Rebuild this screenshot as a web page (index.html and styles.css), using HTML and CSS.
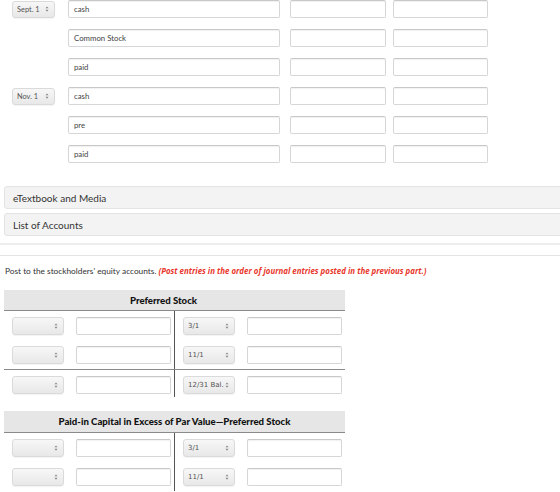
FILE: index.html
```html
<!DOCTYPE html>
<html lang="en">
<head>
    <meta charset="UTF-8">
    <meta name="viewport" content="width=device-width, initial-scale=1.0">
    <title>Stockholders' Equity</title>
    <link rel="stylesheet" href="styles.css">
</head>
<body>
    <div class="journal">
        <div class="jrow">
            <span class="sel date">Sept. 1<svg class="arr" viewBox="0 0 5 8"><path d="M2.5 0.5 L4.5 3 H0.5 Z M2.5 7.5 L4.5 5 H0.5 Z"/></svg></span>
            <input class="acct" type="text" value="cash">
            <input class="amt debit" type="text">
            <input class="amt credit" type="text">
        </div>
        <div class="jrow">
            <span class="date blank"></span>
            <input class="acct" type="text" value="Common Stock">
            <input class="amt debit" type="text">
            <input class="amt credit" type="text">
        </div>
        <div class="jrow">
            <span class="date blank"></span>
            <input class="acct" type="text" value="paid">
            <input class="amt debit" type="text">
            <input class="amt credit" type="text">
        </div>
        <div class="jrow">
            <span class="sel date">Nov. 1<svg class="arr" viewBox="0 0 5 8"><path d="M2.5 0.5 L4.5 3 H0.5 Z M2.5 7.5 L4.5 5 H0.5 Z"/></svg></span>
            <input class="acct" type="text" value="cash">
            <input class="amt debit" type="text">
            <input class="amt credit" type="text">
        </div>
        <div class="jrow">
            <span class="date blank"></span>
            <input class="acct" type="text" value="pre">
            <input class="amt debit" type="text">
            <input class="amt credit" type="text">
        </div>
        <div class="jrow">
            <span class="date blank"></span>
            <input class="acct" type="text" value="paid">
            <input class="amt debit" type="text">
            <input class="amt credit" type="text">
        </div>
    </div>

    <div class="links">
        <div class="bar">eTextbook and Media</div>
        <div class="bar">List of Accounts</div>
    </div>
    <div class="band"></div>
    <div class="rule"></div>

    <p class="prompt">Post to the stockholders' equity accounts. <em class="note">(Post entries in the order of journal entries posted in the previous part.)</em></p>

    <div class="taccount">
        <div class="thead first">Preferred Stock</div>
        <div class="trow">
            <div class="side dr">
                <span class="sel tsel"><svg class="arr" viewBox="0 0 5 8"><path d="M2.5 0.5 L4.5 3 H0.5 Z M2.5 7.5 L4.5 5 H0.5 Z"/></svg></span>
                <input class="tamt" type="text">
            </div>
            <div class="side cr">
                <span class="sel tsel">3/1<svg class="arr" viewBox="0 0 5 8"><path d="M2.5 0.5 L4.5 3 H0.5 Z M2.5 7.5 L4.5 5 H0.5 Z"/></svg></span>
                <input class="tamt" type="text">
            </div>
        </div>
        <div class="trow">
            <div class="side dr">
                <span class="sel tsel"><svg class="arr" viewBox="0 0 5 8"><path d="M2.5 0.5 L4.5 3 H0.5 Z M2.5 7.5 L4.5 5 H0.5 Z"/></svg></span>
                <input class="tamt" type="text">
            </div>
            <div class="side cr">
                <span class="sel tsel">11/1<svg class="arr" viewBox="0 0 5 8"><path d="M2.5 0.5 L4.5 3 H0.5 Z M2.5 7.5 L4.5 5 H0.5 Z"/></svg></span>
                <input class="tamt" type="text">
            </div>
        </div>
        <div class="trow total">
            <div class="side dr">
                <span class="sel tsel"><svg class="arr" viewBox="0 0 5 8"><path d="M2.5 0.5 L4.5 3 H0.5 Z M2.5 7.5 L4.5 5 H0.5 Z"/></svg></span>
                <input class="tamt" type="text">
            </div>
            <div class="side cr">
                <span class="sel tsel">12/31 Bal.<svg class="arr" viewBox="0 0 5 8"><path d="M2.5 0.5 L4.5 3 H0.5 Z M2.5 7.5 L4.5 5 H0.5 Z"/></svg></span>
                <input class="tamt" type="text">
            </div>
        </div>
    </div>

    <div class="taccount">
        <div class="thead">Paid-in Capital in Excess of Par Value—Preferred Stock</div>
        <div class="trow">
            <div class="side dr">
                <span class="sel tsel"><svg class="arr" viewBox="0 0 5 8"><path d="M2.5 0.5 L4.5 3 H0.5 Z M2.5 7.5 L4.5 5 H0.5 Z"/></svg></span>
                <input class="tamt" type="text">
            </div>
            <div class="side cr">
                <span class="sel tsel">3/1<svg class="arr" viewBox="0 0 5 8"><path d="M2.5 0.5 L4.5 3 H0.5 Z M2.5 7.5 L4.5 5 H0.5 Z"/></svg></span>
                <input class="tamt" type="text">
            </div>
        </div>
        <div class="trow">
            <div class="side dr">
                <span class="sel tsel"><svg class="arr" viewBox="0 0 5 8"><path d="M2.5 0.5 L4.5 3 H0.5 Z M2.5 7.5 L4.5 5 H0.5 Z"/></svg></span>
                <input class="tamt" type="text">
            </div>
            <div class="side cr">
                <span class="sel tsel">11/1<svg class="arr" viewBox="0 0 5 8"><path d="M2.5 0.5 L4.5 3 H0.5 Z M2.5 7.5 L4.5 5 H0.5 Z"/></svg></span>
                <input class="tamt" type="text">
            </div>
        </div>
    </div>
</body>
</html>
```

FILE: styles.css
```css
html, body {
    overflow: hidden;
}

body {
    margin: 0;
    padding: 0;
    font-family: Lato, "Open Sans", sans-serif;
    color: #333;
    background-color: #fff;
}

/* journal entry grid */
.journal {
    display: flex;
    flex-direction: column;
    gap: 11px;
    padding-left: 12px;
}

.jrow {
    display: flex;
    align-items: center;
    height: 18px;
}

input {
    box-sizing: border-box;
    height: 18px;
    margin: 0;
    padding: 0 5px;
    border: 1px solid #d6d6d6;
    border-top-color: #c8c8c8;
    border-radius: 2px;
    box-shadow: inset 0 1px 1px rgba(0, 0, 0, 0.06);
    background-color: #fff;
    font-family: Lato, sans-serif;
    font-size: 7.8px;
    color: #444;
    outline: none;
}

.date {
    width: 43px;
    height: 17px;
    flex: none;
}

.acct {
    width: 212px;
    margin-left: 13px;
}

.amt.debit {
    width: 96px;
    margin-left: 10px;
}

.amt.credit {
    width: 95px;
    margin-left: 7px;
}

/* fake select boxes */
.sel {
    box-sizing: border-box;
    display: flex;
    align-items: center;
    padding: 0 5px 0 4px;
    border: 1px solid #dadada;
    border-radius: 3px;
    background: linear-gradient(#f7f7f7, #e8e8e8);
    box-shadow: 0 1px 1px rgba(0, 0, 0, 0.05);
    font-size: 7.4px;
    color: #555;
}

.sel .arr {
    flex: none;
    width: 4px;
    height: 6px;
    margin-left: auto;
    fill: #888;
}

/* accordion links */
.links {
    display: flex;
    flex-direction: column;
    gap: 4px;
    margin-top: 23px;
    margin-left: 4px;
    margin-right: -10px;
}

.bar {
    height: 23px;
    box-sizing: border-box;
    display: flex;
    align-items: center;
    padding-left: 8px;
    border: 1px solid #e4e4e4;
    border-radius: 3px;
    background-color: #f3f3f3;
    font-size: 10px;
    color: #333;
}

.band {
    height: 2px;
    margin-top: 7px;
    background-color: #ededed;
}

.rule {
    height: 1px;
    margin-top: 10px;
    background-color: #e4e4e4;
}

.prompt {
    margin: 8px 0 0 5px;
    line-height: 14px;
    font-size: 8.3px;
    color: #333;
}

.note {
    font-family: "Open Sans", sans-serif;
    font-weight: bold;
    font-size: 7.9px;
    color: #e8372c;
}

/* T accounts */
.taccount {
    width: 341px;
    margin-left: 4px;
    margin-top: 12px;
}

.taccount + .taccount {
    margin-top: 14px;
}

.thead {
    height: 20px;
    display: flex;
    align-items: center;
    justify-content: center;
    background-color: #e6e6e6;
    border-bottom: 1px solid #8a8a8a;
    font-size: 9.6px;
    font-weight: 900;
    color: #111;
}

.thead.first {
    padding-right: 22px;
}

.taccount + .taccount .thead {
    height: 21px;
}

.trow {
    display: flex;
}

.trow.total {
    border-top: 1px solid #8a8a8a;
}

.trow.total .side {
    padding-bottom: 3px;
}

.side {
    display: flex;
    align-items: center;
    padding: 6px 0 5px 8px;
}

.side.dr {
    width: 171px;
    box-sizing: border-box;
    border-right: 1px solid #555;
}

.tsel {
    width: 52px;
    height: 18px;
    font-family: "DejaVu Sans", Verdana, sans-serif;
    font-size: 7px;
}

.tamt {
    width: 95px;
    margin-left: 12px;
}
```
